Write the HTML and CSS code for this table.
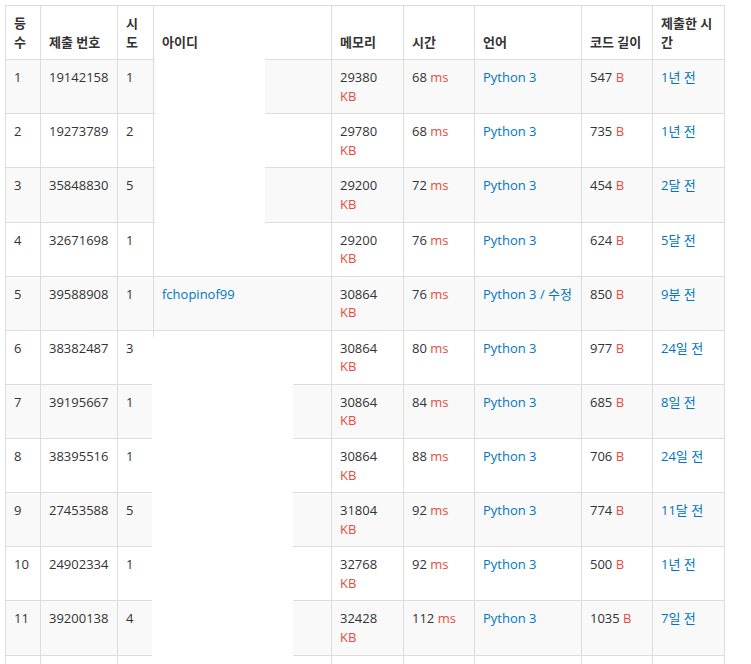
FILE: index.html
```html
<!DOCTYPE html>
<html lang="ko">
<head>
<meta charset="utf-8">
<title>채점 현황</title>
<link rel="stylesheet" href="styles.css">
</head>
<body>
<div class="wrap">
<table class="status">
<colgroup>
<col class="c-rank"><col class="c-id"><col class="c-try"><col class="c-user"><col class="c-mem"><col class="c-time"><col class="c-lang"><col class="c-len"><col class="c-when">
</colgroup>
<thead>
<tr><th>등수</th><th>제출 번호</th><th>시도</th><th>아이디</th><th>메모리</th><th>시간</th><th>언어</th><th>코드 길이</th><th>제출한 시간</th></tr>
</thead>
<tbody>
<tr><td>1</td><td>19142158</td><td>1</td><td></td><td>29380 <span class="unit">KB</span></td><td>68 <span class="unit">ms</span></td><td><a>Python 3</a></td><td>547 <span class="unit">B</span></td><td><a>1년 전</a></td></tr>
<tr><td>2</td><td>19273789</td><td>2</td><td></td><td>29780 <span class="unit">KB</span></td><td>68 <span class="unit">ms</span></td><td><a>Python 3</a></td><td>735 <span class="unit">B</span></td><td><a>1년 전</a></td></tr>
<tr><td>3</td><td>35848830</td><td>5</td><td></td><td>29200 <span class="unit">KB</span></td><td>72 <span class="unit">ms</span></td><td><a>Python 3</a></td><td>454 <span class="unit">B</span></td><td><a>2달 전</a></td></tr>
<tr><td>4</td><td>32671698</td><td>1</td><td></td><td>29200 <span class="unit">KB</span></td><td>76 <span class="unit">ms</span></td><td><a>Python 3</a></td><td>624 <span class="unit">B</span></td><td><a>5달 전</a></td></tr>
<tr><td>5</td><td>39588908</td><td>1</td><td><a>fchopinof99</a></td><td>30864 <span class="unit">KB</span></td><td>76 <span class="unit">ms</span></td><td><a>Python 3</a> <a>/</a> <a>수정</a></td><td>850 <span class="unit">B</span></td><td><a>9분 전</a></td></tr>
<tr><td>6</td><td>38382487</td><td>3</td><td></td><td>30864 <span class="unit">KB</span></td><td>80 <span class="unit">ms</span></td><td><a>Python 3</a></td><td>977 <span class="unit">B</span></td><td><a>24일 전</a></td></tr>
<tr><td>7</td><td>39195667</td><td>1</td><td></td><td>30864 <span class="unit">KB</span></td><td>84 <span class="unit">ms</span></td><td><a>Python 3</a></td><td>685 <span class="unit">B</span></td><td><a>8일 전</a></td></tr>
<tr><td>8</td><td>38395516</td><td>1</td><td></td><td>30864 <span class="unit">KB</span></td><td>88 <span class="unit">ms</span></td><td><a>Python 3</a></td><td>706 <span class="unit">B</span></td><td><a>24일 전</a></td></tr>
<tr><td>9</td><td>27453588</td><td>5</td><td></td><td>31804 <span class="unit">KB</span></td><td>92 <span class="unit">ms</span></td><td><a>Python 3</a></td><td>774 <span class="unit">B</span></td><td><a>11달 전</a></td></tr>
<tr><td>10</td><td>24902334</td><td>1</td><td></td><td>32768 <span class="unit">KB</span></td><td>92 <span class="unit">ms</span></td><td><a>Python 3</a></td><td>500 <span class="unit">B</span></td><td><a>1년 전</a></td></tr>
<tr><td>11</td><td>39200138</td><td>4</td><td></td><td>32428 <span class="unit">KB</span></td><td>112 <span class="unit">ms</span></td><td><a>Python 3</a></td><td>1035 <span class="unit">B</span></td><td><a>7일 전</a></td></tr>
<tr class="tail"><td></td><td></td><td></td><td></td><td></td><td></td><td></td><td></td><td></td></tr>
</tbody>
</table>
<div class="redact redact-a"></div>
<div class="redact redact-b"></div>
</div>
</body>
</html>
```
FILE: styles.css
```css
html, body {
  margin: 0;
  background: #fff;
}
body {
  padding: 5px 0 0 5px;
  font-family: "Open Sans", "Noto Sans CJK KR", sans-serif;
  font-size: 13px;
  line-height: 1.42857143;
  color: #333;
}
.wrap {
  position: relative;
  width: 720px;
}
.status {
  border-collapse: collapse;
  table-layout: fixed;
  width: 720px;
}
.c-rank { width: 35px; }
.c-id { width: 77px; }
.c-try { width: 36px; }
.c-user { width: 178px; }
.c-mem { width: 72px; }
.c-time { width: 71px; }
.c-lang { width: 107px; }
.c-len { width: 71px; }
.c-when { width: 72px; }
.status th,
.status td {
  border: 1px solid #ddd;
  padding: 8px;
  text-align: left;
  vertical-align: top;
}
.status th {
  vertical-align: bottom;
  font-weight: bold;
  color: #333;
}
.status tbody tr:nth-child(odd) td {
  background: #f9f9f9;
}
.status .tail td {
  height: 37px;
}
.status a {
  color: #0076c0;
  text-decoration: none;
}
.unit {
  color: #e74c3c;
}
.redact {
  position: absolute;
  background: #fff;
}
.redact-a {
  left: 150px;
  top: 54px;
  width: 110px;
  height: 216px;
}
.redact-b {
  left: 147px;
  top: 332px;
  width: 141px;
  height: 400px;
}
```
